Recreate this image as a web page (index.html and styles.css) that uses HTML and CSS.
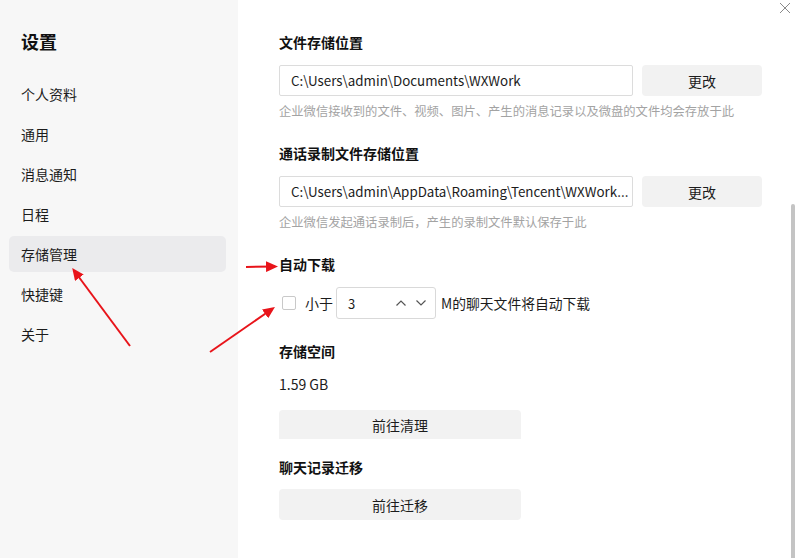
FILE: index.html
```html
<!DOCTYPE html>
<html lang="zh-CN">
<head>
  <meta charset="utf-8">
  <title>设置</title>
  <link rel="stylesheet" href="styles.css">
</head>
<body>
  <div class="window">
    <div class="sidebar">
      <h2 class="side-title">设置</h2>
      <div class="nav">
        <div class="nav-item">个人资料</div>
        <div class="nav-item">通用</div>
        <div class="nav-item">消息通知</div>
        <div class="nav-item">日程</div>
        <div class="nav-item active">存储管理</div>
        <div class="nav-item">快捷键</div>
        <div class="nav-item">关于</div>
      </div>
    </div>

    <div class="main">
      <div class="sec-title">文件存储位置</div>
      <div class="path-row">
        <div class="path-input">C:\Users\admin\Documents\WXWork</div>
        <button class="btn-change">更改</button>
      </div>
      <div class="hint">企业微信接收到的文件、视频、图片、产生的消息记录以及微盘的文件均会存放于此</div>

      <div class="sec-title gap">通话录制文件存储位置</div>
      <div class="path-row">
        <div class="path-input">C:\Users\admin\AppData\Roaming\Tencent\WXWork...</div>
        <button class="btn-change">更改</button>
      </div>
      <div class="hint">企业微信发起通话录制后，产生的录制文件默认保存于此</div>

      <div class="sec-title gap">自动下载</div>
      <div class="auto-row">
        <span class="checkbox"></span>
        <span class="auto-label">小于</span>
        <div class="spin">
          <span class="spin-val">3</span>
          <svg class="chev" width="12" height="8" viewBox="0 0 12 8"><path d="M1.5 6.5 L6 2 L10.5 6.5" fill="none" stroke="#555" stroke-width="1.2"/></svg>
          <svg class="chev" width="12" height="8" viewBox="0 0 12 8"><path d="M1.5 1.5 L6 6 L10.5 1.5" fill="none" stroke="#555" stroke-width="1.2"/></svg>
        </div>
        <span class="auto-text">M的聊天文件将自动下载</span>
      </div>

      <div class="sec-title gap">存储空间</div>
      <div class="size">1.59 GB</div>
      <button class="btn-wide clipped">前往清理</button>

      <div class="sec-title gap-s">聊天记录迁移</div>
      <button class="btn-wide move">前往迁移</button>
    </div>

    <svg class="close" width="12" height="12" viewBox="0 0 12 12"><path d="M1 1 L11 11 M11 1 L1 11" stroke="#8a8a8a" stroke-width="1"/></svg>
    <div class="scroll-thumb"></div>

    <svg class="marks" width="796" height="558" viewBox="0 0 796 558">
      <defs>
        <marker id="head" markerWidth="6" markerHeight="5.4" refX="4.5" refY="2.7" orient="auto" markerUnits="strokeWidth">
          <path d="M0 0 L6 2.7 L0 5.4 Z" fill="#e8141a"/>
        </marker>
      </defs>
      <line x1="130" y1="346" x2="74" y2="270.5" stroke="#e8141a" stroke-width="2" marker-end="url(#head)"/>
      <line x1="210" y1="352" x2="272.5" y2="308.7" stroke="#e8141a" stroke-width="2" marker-end="url(#head)"/>
      <line x1="246" y1="267" x2="275" y2="266.5" stroke="#e8141a" stroke-width="2" marker-end="url(#head)"/>
    </svg>
  </div>
</body>
</html>
```

FILE: styles.css
```css
* {
  box-sizing: border-box;
}

body {
  margin: 0;
  font-family: "Microsoft YaHei", "Noto Sans CJK SC", "Noto Sans", sans-serif;
  color: #1c1c1c;
  background: #fff;
}

.window {
  position: relative;
  width: 796px;
  height: 558px;
  display: flex;
  overflow: hidden;
}

/* left nav */
.sidebar {
  width: 238px;
  background: #f7f7f7;
  padding: 0 12px 0 9px;
}

.side-title {
  margin: 30px 0 0 12px;
  font-size: 18px;
  line-height: 22px;
  font-weight: bold;
  color: #111;
}

.nav {
  display: flex;
  flex-direction: column;
  gap: 4px;
  margin-top: 24px;
}

.nav-item {
  height: 36px;
  line-height: 36px;
  padding-left: 12px;
  font-size: 14px;
  border-radius: 5px;
}

.nav-item.active {
  background: #ebebed;
}

/* right panel */
.main {
  flex: 1;
  padding: 32px 0 0 41px;
}

.sec-title {
  font-size: 14px;
  line-height: 20px;
  font-weight: bold;
  color: #111;
}

.sec-title.gap {
  margin-top: 22px;
}

.sec-title.gap-s {
  margin-top: 18px;
}

.path-row {
  display: flex;
  gap: 9px;
  margin-top: 13px;
}

.path-input {
  width: 354px;
  height: 31px;
  border: 1px solid #dcdcdc;
  border-radius: 2px;
  padding-left: 11px;
  font-size: 13.35px;
  line-height: 29px;
  white-space: nowrap;
  overflow: hidden;
}

.btn-change {
  width: 120px;
  height: 31px;
  border: none;
  border-radius: 4px;
  background: #f2f2f2;
  font-family: inherit;
  font-size: 14px;
  color: #1c1c1c;
}

.hint {
  margin-top: 5px;
  font-size: 12.3px;
  line-height: 20px;
  color: #a3a3a3;
}

.auto-row {
  display: flex;
  align-items: center;
  height: 32px;
  margin-top: 13px;
  font-size: 14px;
}

.checkbox {
  width: 14px;
  height: 14px;
  margin-left: 3px;
  border: 1px solid #c9c9c9;
  border-radius: 2px;
}

.auto-label {
  margin-left: 9px;
}

.spin {
  display: flex;
  align-items: center;
  width: 100px;
  height: 32px;
  margin-left: 3px;
  border: 1px solid #d9d9d9;
  border-radius: 3px;
  padding-left: 11px;
}

.spin-val {
  flex: 1;
  font-size: 13px;
}

.chev {
  margin-right: 8px;
}

.auto-text {
  margin-left: 5px;
  font-size: 13.8px;
}

.size {
  margin-top: 13px;
  font-size: 14px;
  line-height: 20px;
}

.btn-wide {
  display: block;
  width: 242px;
  height: 31px;
  border: none;
  border-radius: 4px;
  background: #f2f2f2;
  font-family: inherit;
  font-size: 14px;
  color: #1c1c1c;
}

.btn-wide.clipped {
  margin-top: 16px;
  height: 29px;
  border-radius: 4px 4px 0 0;
  padding-top: 2px;
}

.btn-wide.move {
  margin-top: 12px;
}

/* overlays */
.close {
  position: absolute;
  top: 2px;
  right: 5px;
}

.scroll-thumb {
  position: absolute;
  top: 204px;
  right: 1px;
  width: 4px;
  height: 360px;
  background: #c4c4c4;
  border-radius: 2px;
}

.marks {
  position: absolute;
  top: 0;
  left: 0;
  pointer-events: none;
}
```
